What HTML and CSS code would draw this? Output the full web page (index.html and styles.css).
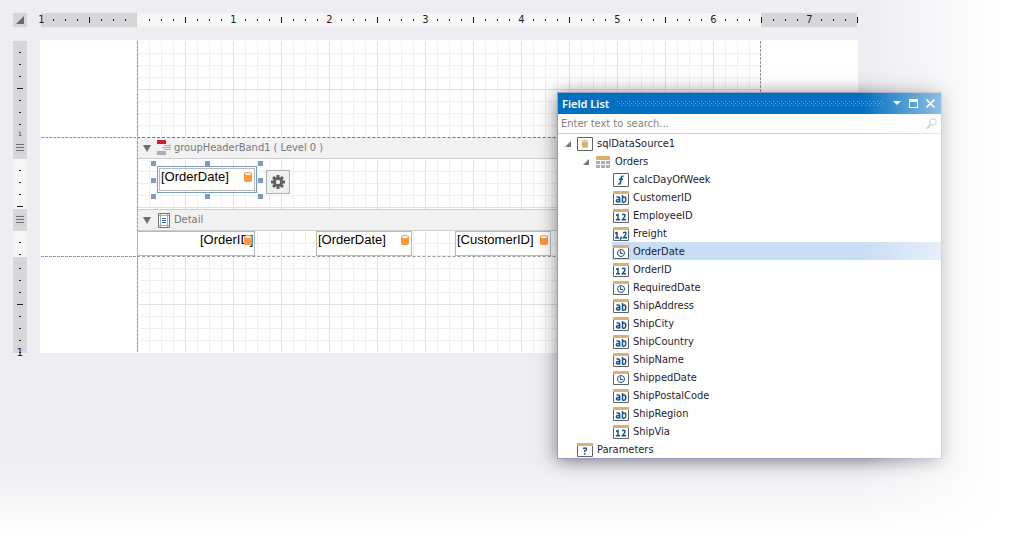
FILE: index.html
```html
<!DOCTYPE html>
<html lang="en">
<head>
<meta charset="utf-8">
<title>Report Designer</title>
<link rel="stylesheet" href="styles.css">
</head>
<body>
<svg class="defs" aria-hidden="true">
  <symbol id="db" viewBox="0 0 8 10"><path fill="#fd983c" d="M0 1.500Q0 0 4 0T8 1.500V8.500Q8 10 4 10T0 8.500z"/><path fill="#fff" d="M1 1.500Q4 .5 7 1.500V2.500Q4 4 1 2.500z"/></symbol>
  <symbol id="field" viewBox="0 0 16 14"><path fill="#fff" stroke="#606266" d="M.5.5h15v13H.5z"/><path fill="#dcb16f" d="M0 0h16v3H0z"/></symbol>
  <symbol id="text" viewBox="0 0 16 14"><use href="#field"/><g fill="none" stroke="#15548e" stroke-width="1.500"><path d="M3.500 6H5q1.700 0 1.700 1.500V11.500M6.500 8.500H5Q3.400 8.500 3.400 9.800T5 11Q6.700 11 6.700 9"/><path d="M9.500 4V11.500M9.500 6.500Q12.800 5 12.800 8.500T9.500 11"/></g></symbol>
  <symbol id="int" viewBox="0 0 16 14"><use href="#field"/><path fill="none" stroke="#15548e" stroke-width="1.500" d="M3 6.200 5 5.500V10.500M3 10.700H7M9 5.800Q12 4.500 12 6.500 12 7.700 9.500 10.700H13"/></symbol>
  <symbol id="float" viewBox="0 0 16 14"><use href="#field"/><path fill="none" stroke="#15548e" stroke-width="1.500" d="M2 6.200 4 5.500V10.500M2 10.700H6M8 9.500V11L7 12.500M10 5.800Q13 4.500 13 6.500 13 7.700 10.500 10.700H14"/></symbol>
  <symbol id="date" viewBox="0 0 16 14"><use href="#field"/><circle cx="8" cy="8" r="3.500" fill="none" stroke="#15548e"/><path fill="none" stroke="#15548e" d="M7.500 5.500V8.500H10"/></symbol>
  <symbol id="calc" viewBox="0 0 16 14"><path fill="#fff" stroke="#606266" d="M.5.5h15v13H.5z"/><path fill="none" stroke="#15548e" stroke-width="1.600" d="M10.500 3.500Q8.500 2.500 8.200 5L7.500 9.500Q7 11.500 5.200 10.800M6 6.300H10"/></symbol>
  <symbol id="param" viewBox="0 0 16 14"><use href="#field"/><path fill="none" stroke="#15548e" stroke-width="1.500" d="M6 5.500Q9.700 4.300 9.500 6.300 9.400 7.500 7.700 8V9.300M7.700 10.200V11.700"/></symbol>
  <symbol id="source" viewBox="0 0 16 14"><path fill="#fff" stroke="#606266" d="M.5.5h15v13H.5z"/><path fill="#dcb16f" d="M5 4Q8 2 11 4V10Q8 12 5 10z"/><path stroke="#f3dfbf" d="M6 4.500h4"/></symbol>
  <symbol id="table" viewBox="0 0 14 12"><path fill="#dcb16f" d="M0 0h14v4H0z"/><path fill="#adadad" d="M0 5h4v3H0zM5 5h4v3H5zM10 5h4v3h-4zM0 9h4v3H0zM5 9h4v3H5zM10 9h4v3h-4z"/></symbol>
  <symbol id="open" viewBox="0 0 6 6"><path fill="#777" d="M6 0V6H0z"/></symbol>
</svg>

<main class="designer">
  <button class="corner" aria-label="Select report"><svg width="8" height="8"><path fill="#6b6b6b" d="M8 0V8H0z"/></svg></button>
  <div class="hruler">
    <div class="seg dark left"><span class="num first">1</span></div>
    <div class="seg light">
      <div class="half"></div>
      <div class="inch"><span class="num">1</span></div>
      <div class="inch"><span class="num">2</span></div>
      <div class="inch"><span class="num">3</span></div>
      <div class="inch"><span class="num">4</span></div>
      <div class="inch"><span class="num">5</span></div>
      <div class="inch"><span class="num">6</span></div>
    </div>
    <div class="seg dark"><div class="inch"><span class="num">7</span></div></div>
    <div class="end"></div>
  </div>

  <div class="vruler">
    <div class="vseg dark margin"><span class="vnum small">1</span></div>
    <div class="vseg dark head"><i class="grip"></i></div>
    <div class="vseg light group"></div>
    <div class="vseg dark head"><i class="grip"></i></div>
    <div class="vseg light detail"></div>
    <div class="vseg dark margin"><span class="vnum">1</span></div>
  </div>

  <div class="paper">
    <section class="band margin"><div class="canvas"></div></section>
    <section class="band head dashed">
      <h2 class="title">
        <svg width="8" height="7"><path fill="#707070" d="M0 0H8L4 7z"/></svg>
        <svg class="icon" width="14" height="16"><path fill="#d01f28" d="M0 0h9v4H0z"/><path fill="#adadad" d="M0 11h9v4H0zM7 5h7v1H7zM5 7h9v1H5zM7 9h7v1H7z"/></svg>
        <span>groupHeaderBand1 ( Level 0 )</span>
      </h2>
    </section>
    <section class="band group">
      <div class="canvas">
        <div class="cell selected">[OrderDate]<svg class="db"><use href="#db"/></svg>
          <i class="h nw"></i><i class="h n"></i><i class="h ne"></i><i class="h w"></i><i class="h e"></i><i class="h sw"></i><i class="h s"></i><i class="h se"></i>
        </div>
        <button class="gear" aria-label="Smart tag"><svg width="14" height="14" viewBox="-7 -7 14 14"><g fill="#606060"><circle r="5"/><path id="t" d="M-1.500-7h3v14h-3z"/><use href="#t" transform="rotate(45)"/><use href="#t" transform="rotate(90)"/><use href="#t" transform="rotate(135)"/></g><circle r="2.200" fill="#f0f0f0"/></svg></button>
      </div>
    </section>
    <section class="band head">
      <h2 class="title">
        <svg width="8" height="7"><path fill="#707070" d="M0 0H8L4 7z"/></svg>
        <svg class="icon" width="14" height="15"><path fill="#fff" stroke="#707070" d="M1.500.5h11v14h-11z"/><path stroke="#aaa" d="M3.500 1v13M10.500 1v13M2 2.500h10M2 12.500h10"/><path stroke="#2d6db5" d="M5 5.500h4M5 7.500h4M5 9.500h4"/></svg>
        <span>Detail</span>
      </h2>
    </section>
    <section class="band detail">
      <div class="canvas">
        <div class="cell order">[OrderID]<svg class="db"><use href="#db"/></svg></div>
        <div class="cell">[OrderDate]<svg class="db"><use href="#db"/></svg></div>
        <div class="cell">[CustomerID]<svg class="db"><use href="#db"/></svg></div>
      </div>
    </section>
    <section class="band margin dashed"><div class="canvas"></div></section>
  </div>
</main>

<aside class="panel">
  <header class="bar">
    <h1>Field List</h1>
    <svg class="dots" height="5"><defs><pattern id="p" width="4" height="4" patternUnits="userSpaceOnUse"><path fill="#62a9dc" d="M0 0h1v1H0zM2 2h1v1H2z"/></pattern></defs><rect width="100%" height="5" fill="url(#p)"/></svg>
    <button aria-label="Menu"><svg width="9" height="9"><path fill="#fff" d="M1 2H9L5 6z"/></svg></button>
    <button aria-label="Maximize"><svg width="9" height="9"><path fill="#fff" d="M0 0h9v9H0zM1 3v5h7V3z" fill-rule="evenodd"/></svg></button>
    <button aria-label="Close"><svg width="9" height="9"><path stroke="#fff" stroke-width="1.600" d="M.5.5l8 8M8.500.5l-8 8"/></svg></button>
  </header>
  <label class="search"><input type="text" placeholder="Enter text to search..." aria-label="Search fields"><svg width="12" height="12"><circle cx="7" cy="4" r="3.300" fill="none" stroke="#999"/><path stroke="#999" stroke-width="1.600" d="M4.500 6.500 1 10.500"/></svg></label>
  <ul class="tree">
    <li class="l0"><svg class="open"><use href="#open"/></svg><svg class="ic"><use href="#source"/></svg>sqlDataSource1</li>
    <li class="l1"><svg class="open"><use href="#open"/></svg><svg class="tb"><use href="#table"/></svg>Orders</li>
    <li class="l2"><svg class="ic"><use href="#calc"/></svg>calcDayOfWeek</li>
    <li class="l2"><svg class="ic"><use href="#text"/></svg>CustomerID</li>
    <li class="l2"><svg class="ic"><use href="#int"/></svg>EmployeeID</li>
    <li class="l2"><svg class="ic"><use href="#float"/></svg>Freight</li>
    <li class="l2 current"><svg class="ic"><use href="#date"/></svg>OrderDate</li>
    <li class="l2"><svg class="ic"><use href="#int"/></svg>OrderID</li>
    <li class="l2"><svg class="ic"><use href="#date"/></svg>RequiredDate</li>
    <li class="l2"><svg class="ic"><use href="#text"/></svg>ShipAddress</li>
    <li class="l2"><svg class="ic"><use href="#text"/></svg>ShipCity</li>
    <li class="l2"><svg class="ic"><use href="#text"/></svg>ShipCountry</li>
    <li class="l2"><svg class="ic"><use href="#text"/></svg>ShipName</li>
    <li class="l2"><svg class="ic"><use href="#date"/></svg>ShippedDate</li>
    <li class="l2"><svg class="ic"><use href="#text"/></svg>ShipPostalCode</li>
    <li class="l2"><svg class="ic"><use href="#text"/></svg>ShipRegion</li>
    <li class="l2"><svg class="ic"><use href="#int"/></svg>ShipVia</li>
    <li class="l0 leaf"><svg class="ic"><use href="#param"/></svg>Parameters</li>
  </ul>
</aside>
<div class="fade"></div>
</body>
</html>
```
FILE: styles.css
```css
* { box-sizing: border-box; }
html, body { min-height: 100vh; }
body {
  margin: 0;
  background: #eeedf2;
  font: 11px/14px "DejaVu Sans Condensed", "DejaVu Sans", sans-serif;
  color: #1e1e2a;
  overflow: hidden;
}
h1, h2, ul { margin: 0; padding: 0; font-size: 11px; font-weight: normal; }
svg { flex: none; display: block; }
button { border: 0; padding: 0; background: none; display: flex; align-items: center; justify-content: center; }
.defs { position: absolute; width: 0; height: 0; }

/* Designer surface */
.designer {
  display: grid;
  grid-template-columns: 14px max-content;
  grid-template-rows: 14px auto;
  gap: 13px;
  padding: 13px;
}
.corner { background: #d6d6d8; }
.dark { background-color: #d6d6d8; }
.light { background-color: #f6f6f6; }

/* Horizontal ruler */
.hruler { display: flex; padding-left: 1px; }
.seg { display: flex; }
.inch, .left {
  width: 96px;
  display: flex;
  justify-content: center;
  background-image: linear-gradient(#1e1e1e, #1e1e1e), linear-gradient(to right, #1e1e1e 1px, transparent 1px);
  background-size: 1px 6px, 12px 2px;
  background-position: 0 4px, 0 6px;
  background-repeat: no-repeat, repeat-x;
}
.inch { background-color: inherit; }
.left {
  justify-content: flex-start;
  border-left: 1px solid #d6d6d8;
  background-position: 47px 4px, 11px 6px;
}
.half {
  width: 36px;
  margin-left: 12px;
  background: linear-gradient(to right, #1e1e1e 1px, transparent 1px) 0 6px / 12px 2px repeat-x;
}
.end { width: 1px; height: 6px; margin-top: 4px; background: #1e1e1e; }
.num { width: 7px; height: 14px; margin-left: 1px; text-align: center; background: inherit; background-image: none; }
.num.first { margin-left: -4px; background: none; }

/* Vertical ruler */
.vruler { padding-top: 1px; }
.vseg {
  display: flex;
  justify-content: center;
  background-image: linear-gradient(#1e1e1e, #1e1e1e), linear-gradient(#1e1e1e 1px, transparent 1px);
  background-size: 6px 1px, 2px 12px;
  background-position: 4px 47px, 6px 11px;
  background-repeat: no-repeat, repeat-y;
}
.vseg.head { background-image: none; align-items: center; }
.grip { width: 8px; height: 8px; background: repeating-linear-gradient(#707070 0 1px, transparent 1px 3px); }
.vnum { align-self: flex-end; width: 7px; text-align: center; margin-bottom: -7px; }
.vnum.small { margin-bottom: 0; font-size: 6px; line-height: 6px; background: #d6d6d8; }
.margin { height: 96px; }
.head { height: 22px; }
.group { height: 50px; }
.detail { height: 25px; }
.vseg.margin:last-child { height: 97px; border-top: 1px solid #f6f6f6; }

/* Report page */
.paper {
  position: relative;
  padding-top: 1px;
  background: #fff;
}
.paper::before, .paper::after {
  content: "";
  position: absolute;
  top: 1px;
  bottom: 1px;
  left: 97px;
  width: 1px;
  background: repeating-linear-gradient(#999 0 3px, transparent 3px 4px);
}
.paper::after { left: auto; right: 97px; }
.band { padding: 0 97px; }
.paper .margin:last-child { height: 97px; }
.dashed { background: repeating-linear-gradient(to right, #999 0 3px, transparent 3px 4px) 1px 0 / 100% 1px no-repeat; }
.canvas {
  height: 100%;
  display: flex;
  background-image:
    linear-gradient(#fff, #fff),
    linear-gradient(to right, #e0e0e0 1px, transparent 1px),
    linear-gradient(transparent 48px, #e0e0e0 48px, #e0e0e0 49px, transparent 49px),
    linear-gradient(to right, #f0f0f0 1px, transparent 1px),
    linear-gradient(#f0f0f0 1px, transparent 1px);
  background-size: 100% 1px, 48px 48px, 100% 100%, 12px 12px, 12px 12px;
  background-repeat: no-repeat, repeat-x, no-repeat, repeat, repeat;
  background-size: 100% 1px, 48px 100%, 100% 100%, 12px 12px, 12px 12px;
}
.margin.dashed .canvas {
  height: 96px;
  border-top: 1px dashed #999;
  background-origin: border-box;
  background-clip: border-box;
}
.title {
  height: 22px;
  display: flex;
  align-items: center;
  gap: 3px;
  padding-left: 6px;
  background: #f2f2f2;
  border-top: 1px solid #ccc;
  border-bottom: 1px solid #ccc;
  color: #777;
}
.dashed .title { border-top: 1px dashed #777; }
.icon { margin-left: 3px; }
.cell {
  position: relative;
  width: 96px;
  height: 25px;
  padding-left: 1px;
  border: 1px solid #b8b8b8;
  background: #fff;
  font: 13px/16px "Liberation Sans", Arial, sans-serif;
  color: #000;
}
.db { position: absolute; right: 2px; top: 3px; width: 8px; height: 10px; }
.detail .canvas { gap: 43px; }
.detail .order { width: 118px; padding-left: 62px; margin-right: 18px; }
.group .canvas { padding: 9px 0 0 22px; gap: 11px; }
.selected { height: 23px; outline: 1px solid #7c9cc4; outline-offset: 1px; }
.h { position: absolute; width: 5px; height: 5px; background: #7c9cc4; }
.nw, .n, .ne { top: -8px; }
.w, .e { top: 9px; }
.sw, .s, .se { bottom: -9px; }
.nw, .w, .sw { left: -9px; }
.ne, .e, .se { right: -9px; }
.n, .s { left: 45px; }
.gear { width: 24px; height: 24px; margin-top: 2px; background: #f0f0f0; border: 1px solid #b0b0b0; }

/* Field list window, floating above the designer */
.panel {
  position: absolute;
  top: 92px;
  left: 557px;
  width: 385px;
  background: #fff;
  border: 1px solid #9a9abf;
  box-shadow: 0 2px 18px rgba(0, 0, 0, .5);
}
.bar { display: flex; align-items: center; height: 21px; gap: 8px; padding: 0 6px 0 4px; background: #006fc0; color: #fff; }
.bar h1 { font-size: 12px; font-weight: 600; font-family: "Noto Sans", "Open Sans", sans-serif; font-size: 11px; }
.dots { flex: 1; min-width: 0; }
.search { display: flex; align-items: center; height: 20px; padding: 1px 3px 0; border-bottom: 1px solid #ccccdc; }
.search input { flex: 1; min-width: 0; border: 0; padding: 0; outline: 0; background: none; font: inherit; }
.search input::placeholder { color: #808080; opacity: 1; }
.tree { list-style: none; }
.tree li { display: flex; align-items: center; height: 18px; padding-top: 2px; }
.l0 { padding-left: 7px; }
.l1 { padding-left: 25px; }
.l2 { margin-left: 54px; padding-left: 1px; }
.tree .leaf { padding-left: 19px; }
.current { background: #c9ddf4; }
.open { width: 6px; height: 6px; margin-right: 6px; }
.ic { width: 16px; height: 14px; margin-right: 4px; }
.tb { width: 14px; height: 12px; margin: 0 5px 0 1px; }

/* White fade along the right and bottom edges */
.fade {
  position: absolute;
  inset: 0;
  pointer-events: none;
  background:
    linear-gradient(to right, transparent 862px, #fff 1004px),
    linear-gradient(transparent 460px, #fff 536px);
}
```
